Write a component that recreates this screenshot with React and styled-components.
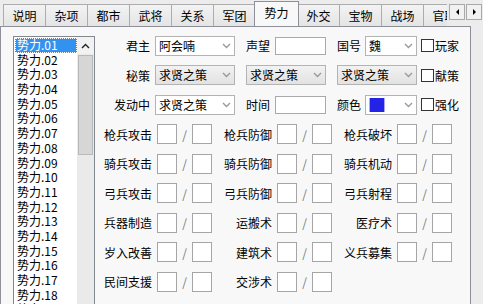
import React from "react";
import styled, { createGlobalStyle } from "styled-components";

const GlobalStyle = createGlobalStyle`
  html, body { margin: 0; padding: 0; background: #ececec; }
  body {
    font-family: "Noto Sans CJK SC", "Noto Sans", sans-serif;
    font-size: 12px;
    color: #000;
  }
`;

const tabs = ["说明", "杂项", "都市", "武将", "关系", "军团", "势力", "外交", "宝物", "战场", "官职"];

const stats = [
  ["枪兵攻击", "枪兵防御", "枪兵破坏"],
  ["骑兵攻击", "骑兵防御", "骑兵机动"],
  ["弓兵攻击", "弓兵防御", "弓兵射程"],
  ["兵器制造", "运搬术", "医疗术"],
  ["岁入改善", "建筑术", "义兵募集"],
  ["民间支援", "交涉术"],
];

const items = Array.from({ length: 20 }, (_, i) => "势力." + String(i + 1).padStart(2, "0"));

function Chevron({ up }) {
  return (
    <svg width="9" height="6" viewBox="0 0 9 6">
      <polyline
        points={up ? "1,5 4.5,1.5 8,5" : "1,1 4.5,4.5 8,1"}
        fill="none"
        stroke={up ? "#222" : "#9a9a9a"}
        strokeWidth="1.4"
      />
    </svg>
  );
}

function Combo({ value, flat, swatch, narrow }) {
  return (
    <ComboBox $flat={flat} $narrow={narrow}>
      <ComboText>{swatch ? <Swatch /> : value}</ComboText>
      <ComboArrow>
        <Chevron />
      </ComboArrow>
    </ComboBox>
  );
}

function Check({ label }) {
  return (
    <CheckWrap>
      <CheckSquare />
      <span>{label}</span>
    </CheckWrap>
  );
}

export default function App() {
  return (
    <>
      <GlobalStyle />
      <Window>
        <TabBar>
          <TabStrip>
            {tabs.map((t) => (
              <Tab key={t} $active={t === "势力"}>
                {t}
              </Tab>
            ))}
          </TabStrip>
          <Spin>
            <SpinBtn>
              <Tri $dir="left" />
            </SpinBtn>
            <SpinBtn>
              <Tri $dir="right" />
            </SpinBtn>
          </Spin>
        </TabBar>
        <Panel>
          <ListBox>
            <ListItems>
              {items.map((it, i) => (
                <ListItem key={it} $selected={i === 0}>
                  {it}
                </ListItem>
              ))}
            </ListItems>
            <ScrollBar>
              <ScrollBtn>
                <Chevron up />
              </ScrollBtn>
              <Thumb />
            </ScrollBar>
          </ListBox>
          <Form>
            <Line>
              <RowLabel>君主</RowLabel>
              <Combo value="阿会喃" />
              <Pair>
                <PairLabel>声望</PairLabel>
                <TextBox />
              </Pair>
              <Pair>
                <PairLabel>国号</PairLabel>
                <Combo value="魏" narrow />
              </Pair>
              <Check label="玩家" />
            </Line>
            <Line>
              <RowLabel>秘策</RowLabel>
              <Combo value="求贤之策" flat />
              <Combo value="求贤之策" flat />
              <Combo value="求贤之策" flat />
              <Check label="献策" />
            </Line>
            <Line>
              <RowLabel>发动中</RowLabel>
              <Combo value="求贤之策" />
              <Pair>
                <PairLabel>时间</PairLabel>
                <TextBox />
              </Pair>
              <Pair>
                <PairLabel>颜色</PairLabel>
                <Combo swatch narrow />
              </Pair>
              <Check label="强化" />
            </Line>
            {stats.map((row, r) => (
              <StatLine key={r}>
                {row.map((name) => (
                  <StatCell key={name}>
                    <StatLabel>{name}</StatLabel>
                    <NumBox />
                    <Slash>/</Slash>
                    <NumBox />
                  </StatCell>
                ))}
              </StatLine>
            ))}
          </Form>
        </Panel>
      </Window>
    </>
  );
}

const Window = styled.div`
  width: 483px;
  height: 304px;
  overflow: hidden;
  background: #ececec;
`;

const TabBar = styled.div`
  display: flex;
  align-items: flex-start;
  height: 26px;
  padding-left: 3px;
`;

const TabStrip = styled.div`
  display: flex;
  align-items: flex-end;
  width: 444px;
  height: 26px;
  overflow: hidden;
`;

const Tab = styled.div`
  flex: none;
  position: relative;
  box-sizing: border-box;
  width: ${(p) => (p.$active ? 45 : 43)}px;
  height: ${(p) => (p.$active ? 26 : 22)}px;
  margin-left: ${(p) => (p.$active ? -2 : -1)}px;
  margin-right: ${(p) => (p.$active ? -1 : 0)}px;
  margin-bottom: ${(p) => (p.$active ? -1 : 0)}px;
  padding-bottom: ${(p) => (p.$active ? 3 : 0)}px;
  z-index: ${(p) => (p.$active ? 2 : 1)};
  border: 1px solid ${(p) => (p.$active ? "#8d9099" : "#acacac")};
  border-bottom: none;
  background: ${(p) => (p.$active ? "#f8f8f8" : "linear-gradient(#f3f3f3, #e4e4e4)")};
  display: flex;
  align-items: center;
  justify-content: center;
  line-height: 14px;
  white-space: nowrap;
  &:first-child {
    margin-left: 0;
  }
`;

const Spin = styled.div`
  display: flex;
  margin-top: 4px;
  margin-left: 2px;
`;

const SpinBtn = styled.div`
  width: 16px;
  height: 16px;
  box-sizing: border-box;
  border: 1px solid #a9a9a9;
  background: #f1f1f1;
  display: flex;
  align-items: center;
  justify-content: center;
  & + & {
    margin-left: 1px;
  }
`;

const Tri = styled.div`
  width: 0;
  height: 0;
  border-top: 3px solid transparent;
  border-bottom: 3px solid transparent;
  ${(p) => (p.$dir === "left" ? "border-right: 3px solid #000;" : "border-left: 3px solid #000;")}
`;

const Panel = styled.div`
  width: 471px;
  height: 290px;
  box-sizing: border-box;
  border: 1px solid #8d9099;
  background: #f8f8f8;
  display: flex;
  align-items: flex-start;
  padding: 9px 0 0 12px;
`;

const ListBox = styled.div`
  flex: none;
  display: flex;
  width: 82px;
  height: 272px;
  box-sizing: border-box;
  border: 1px solid #828790;
  background: #fff;
`;

const ListItems = styled.div`
  flex: 1;
  padding: 1px 0 0 1px;
  overflow: hidden;
`;

const ListItem = styled.div`
  height: 14.7px;
  line-height: 14.7px;
  padding-left: 2px;
  box-sizing: border-box;
  color: ${(p) => (p.$selected ? "#fff" : "#000")};
  background: ${(p) => (p.$selected ? "#3392f0" : "transparent")};
  outline: ${(p) => (p.$selected ? "1px dotted #fff" : "none")};
  outline-offset: -1px;
  white-space: nowrap;
`;

const ScrollBar = styled.div`
  flex: none;
  width: 17px;
  display: flex;
  flex-direction: column;
  background: #eaeaea;
`;

const ScrollBtn = styled.div`
  height: 17px;
  display: flex;
  align-items: center;
  justify-content: center;
  background: #f2f2f2;
`;

const Thumb = styled.div`
  height: 100px;
  margin: 1px 1px 0;
  box-sizing: border-box;
  border: 1px solid #b9b9b9;
  background: #d6d6d6;
`;

const Form = styled.div`
  flex: 1;
  margin-left: 3px;
  margin-top: -5px;
  display: flex;
  flex-direction: column;
`;

const Line = styled.div`
  display: grid;
  grid-template-columns: 46px 80px 80px 80px auto;
  column-gap: 11px;
  align-items: center;
  height: 29.5px;
`;

const RowLabel = styled.span`
  text-align: right;
  margin-right: -6px;
  white-space: nowrap;
`;

const Pair = styled.div`
  display: flex;
  align-items: center;
  justify-content: space-between;
`;

const PairLabel = styled.span`
  flex: none;
  white-space: nowrap;
`;

const ComboBox = styled.div`
  display: flex;
  align-items: center;
  flex: none;
  width: ${(p) => (p.$narrow ? 52 : 80)}px;
  height: 20px;
  box-sizing: border-box;
  border: 1px solid #b3b3b3;
  background: ${(p) => (p.$flat ? "linear-gradient(#f2f2f2, #e2e2e2)" : "#fff")};
`;

const ComboText = styled.div`
  flex: 1;
  min-width: 0;
  padding-left: 3px;
  line-height: 18px;
  white-space: nowrap;
  overflow: hidden;
  display: flex;
  align-items: center;
`;

const ComboArrow = styled.div`
  flex: none;
  width: 16px;
  height: 18px;
  display: flex;
  align-items: center;
  justify-content: center;
`;

const Swatch = styled.div`
  width: 14px;
  height: 14px;
  margin-left: 1px;
  background: #2323e6;
  box-shadow: 0 0 0 1px #a8a8ff;
`;

const TextBox = styled.div`
  width: 51px;
  height: 18px;
  box-sizing: border-box;
  border: 1px solid #a9a9a9;
  background: #fff;
`;

const CheckWrap = styled.div`
  display: flex;
  align-items: center;
  margin-left: -7px;
  white-space: nowrap;
`;

const CheckSquare = styled.div`
  width: 13px;
  height: 13px;
  box-sizing: border-box;
  border: 1px solid #333;
  background: #fff;
  margin-right: 1px;
`;

const StatLine = styled.div`
  display: grid;
  grid-template-columns: repeat(3, 120px);
  align-items: center;
  height: 29.5px;
  padding-left: 5px;
`;

const StatCell = styled.div`
  display: grid;
  grid-template-columns: 54px 20px 15px 20px;
  align-items: center;
`;

const StatLabel = styled.span`
  text-align: right;
  margin-right: 5px;
  white-space: nowrap;
`;

const NumBox = styled.div`
  width: 20px;
  height: 20px;
  box-sizing: border-box;
  border: 1px solid #a5a5a5;
  background: #fff;
`;

const Slash = styled.span`
  text-align: center;
  color: #777;
`;
